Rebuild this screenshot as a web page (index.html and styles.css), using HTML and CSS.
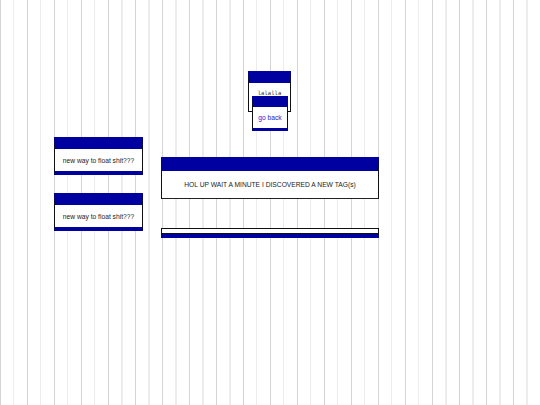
FILE: index.html
```html
<!DOCTYPE html>
<html>
<head>
<meta charset="utf-8">
<link rel="stylesheet" href="styles.css">
</head>
<body>
<div class="top">
  <div class="box box-lala"><span class="mono">lalalla</span></div>
  <div class="box box-back"><a href="#" class="link">go back</a></div>
</div>
<div class="row">
  <div class="side">
    <div class="box box-float">new way to float shit???</div>
    <div class="box box-float">new way to float shit???</div>
  </div>
  <div class="main">
    <div class="box box-big">HOL UP WAIT A MINUTE I DISCOVERED A NEW TAG(s)</div>
    <div class="box box-thin"><div class="thin-inner"></div></div>
  </div>
</div>
</body>
</html>
```

FILE: styles.css
```css
html, body {
  margin: 0;
  padding: 0;
}
body {
  width: 540px;
  min-height: 405px;
  font-family: "Liberation Sans", Arial, sans-serif;
  font-size: 6.7px;
  color: #222;
  background-color: #fff;
  background-image: repeating-linear-gradient(to right,
    #d4d4d4 0, #d4d4d4 1px,
    transparent 1px, transparent 13.5px,
    #ececec 13.5px, #ececec 14.5px,
    transparent 14.5px, transparent 27px);
}
.top {
  display: flex;
  flex-direction: column;
  align-items: center;
  padding-top: 71px;
}
.box {
  box-sizing: border-box;
  background: #fff;
  border: 1px solid #111;
  border-top: 12px solid #0000a0;
  display: flex;
  align-items: center;
  justify-content: center;
  text-align: center;
}
.box-lala {
  width: 43px;
  height: 41px;
  margin-left: -1px;
  padding-bottom: 9px;
}
.mono {
  font-family: "DejaVu Sans Mono", "Liberation Mono", monospace;
  font-size: 5.6px;
  color: #333;
}
.box-back {
  position: relative;
  width: 36px;
  height: 35px;
  margin-top: -16px;
  border-top-width: 11px;
  border-bottom: 3px solid #0000a0;
}
.link {
  color: #1a1ad0;
  text-decoration: none;
}
.row {
  display: flex;
  padding-left: 54px;
  margin-top: 6px;
  gap: 18px;
}
.side {
  width: 89px;
  display: flex;
  flex-direction: column;
  gap: 18px;
}
.box-float {
  height: 38px;
  border-bottom: 4px solid #0000a0;
}
.main {
  width: 218px;
  margin-top: 20px;
  display: flex;
  flex-direction: column;
  gap: 29px;
}
.box-big {
  height: 42px;
  border-top-width: 14px;
  border-bottom: 1px solid #222;
}
.box-thin {
  height: 10px;
  border-top-width: 1px;
  border-top-color: #111;
  border-bottom: 4px solid #0000a0;
  align-items: flex-end;
}
.thin-inner {
  width: 100%;
  height: 1px;
  background: #111;
}
```
